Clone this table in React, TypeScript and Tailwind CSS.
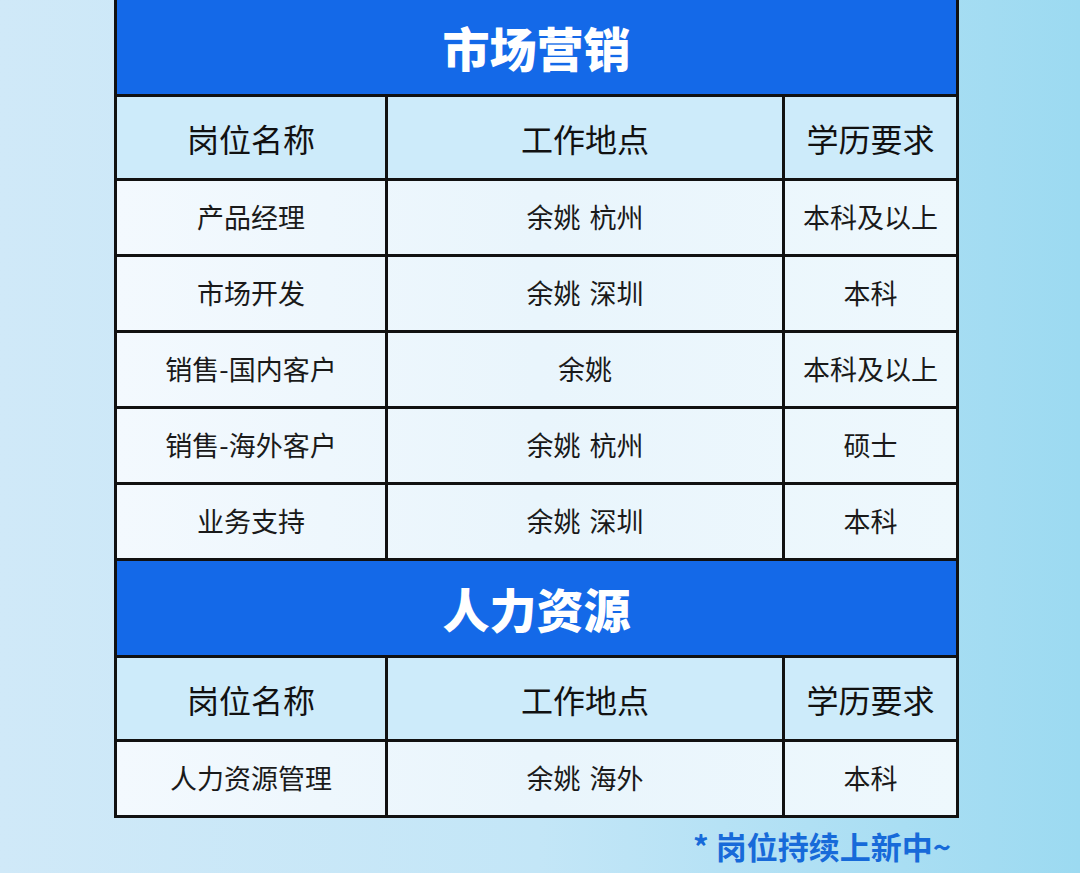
import React from "react";

const font = { fontFamily: '"Noto Sans CJK SC", "Noto Sans", sans-serif' };

type Row = [string, string, string];

const market: Row[] = [
  ["产品经理", "余姚 杭州", "本科及以上"],
  ["市场开发", "余姚 深圳", "本科"],
  ["销售-国内客户", "余姚", "本科及以上"],
  ["销售-海外客户", "余姚 杭州", "硕士"],
  ["业务支持", "余姚 深圳", "本科"],
];

const hr: Row[] = [["人力资源管理", "余姚 海外", "本科"]];

function Title({ text }: { text: string }) {
  return (
    <div className="h-[97px] flex items-center justify-center bg-[#1469e8] border-b-[3px] border-[#111]">
      <span className="text-white text-[47px] font-black leading-none pb-[2px]">{text}</span>
    </div>
  );
}

function HeadRow() {
  return (
    <div className="grid grid-cols-[271px_397px_1fr] h-[84px] bg-[#cdebfa] border-b-[3px] border-[#111] text-[32px] text-[#111]">
      <div className="flex items-center justify-center border-r-[3px] border-[#111]">岗位名称</div>
      <div className="flex items-center justify-center border-r-[3px] border-[#111]">工作地点</div>
      <div className="flex items-center justify-center">学历要求</div>
    </div>
  );
}

function DataRow({ row }: { row: Row }) {
  return (
    <div className="grid grid-cols-[271px_397px_1fr] h-[76px] bg-gradient-to-r from-[#f3f9fe] via-[#e9f5fc] to-[#eef8fd] border-b-[3px] border-[#111] text-[27px] text-[#1a1a1a]">
      <div className="flex items-center justify-center border-r-[3px] border-[#111]">{row[0]}</div>
      <div className="flex items-center justify-center gap-[9px] border-r-[3px] border-[#111]">
        {row[1].split(" ").map((p) => (
          <span key={p}>{p}</span>
        ))}
      </div>
      <div className="flex items-center justify-center">{row[2]}</div>
    </div>
  );
}

export default function App() {
  return (
    <div
      className="w-[1080px] h-[873px] overflow-hidden bg-gradient-to-r from-[#d0e9f8] via-[#c3e6f7] to-[#9cdaf1] pl-[114px]"
      style={font}
    >
      <div className="w-[845px] border-x-[3px] border-[#111]">
        <Title text="市场营销" />
        <HeadRow />
        {market.map((r) => (
          <DataRow key={r[0]} row={r} />
        ))}
        <Title text="人力资源" />
        <HeadRow />
        {hr.map((r) => (
          <DataRow key={r[0]} row={r} />
        ))}
      </div>
      <div className="w-[845px] flex justify-end pr-[8px] pt-[12px]">
        <span className="text-[#176ad9] text-[31px] font-bold leading-none">* 岗位持续上新中~</span>
      </div>
    </div>
  );
}
